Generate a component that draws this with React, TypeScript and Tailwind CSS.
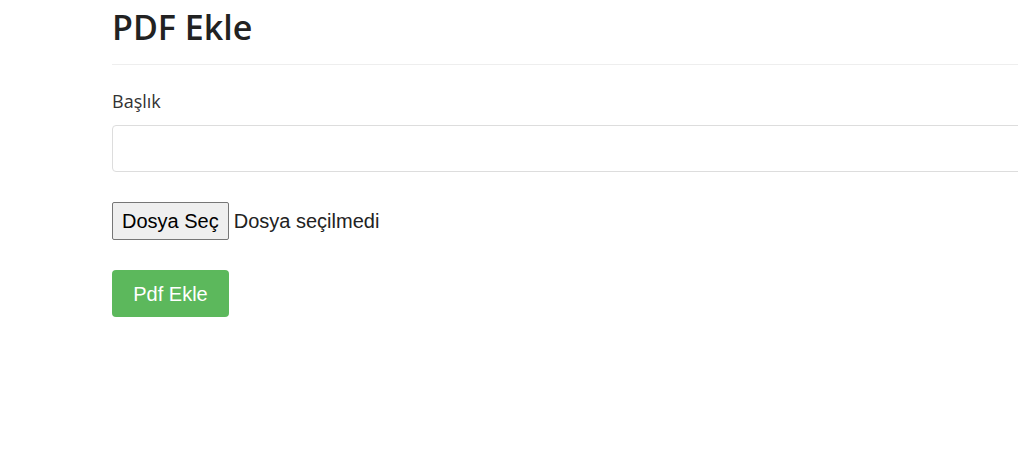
import React from 'react';

const App: React.FC = () => {
  return (
    <div className="w-[1018px] h-[452px] overflow-hidden bg-white">
      <div className="ml-[112px] w-[1100px] text-[#333]">
        <h1 className="pt-[5px] text-[34px] leading-[44px] font-semibold text-[#222] font-['Open_Sans',sans-serif]">PDF Ekle</h1>
        <hr className="mt-[15px] border-t border-[#eee]" />

        <form className="pt-[24px]">
          <label className="block text-[18px] leading-[24px] font-['Open_Sans',sans-serif]">Başlık</label>
          <input
            type="text"
            className="mt-[12px] block w-full h-[47px] rounded-[4px] border border-[#ddd] bg-white px-3"
          />

          <div className="mt-[30px] flex items-center gap-[5px] font-['Liberation_Sans',Arial,sans-serif] text-[20px] text-[#222]">
            <button
              type="button"
              className="h-[38px] px-[9px] rounded-[2px] border border-[#767676] bg-[#efefef] text-black"
            >
              Dosya Seç
            </button>
            <span>Dosya seçilmedi</span>
          </div>

          <button
            type="button"
            className="mt-[30px] block w-[117px] h-[47px] rounded-[4px] bg-[#5cb85c] text-white text-[20px] font-['Liberation_Sans',Arial,sans-serif]"
          >
            Pdf Ekle
          </button>
        </form>
      </div>
    </div>
  );
};

export default App;
